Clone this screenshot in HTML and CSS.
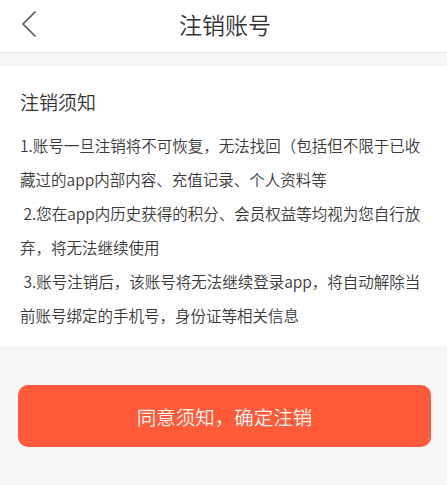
FILE: index.html
```html
<!DOCTYPE html>
<html>
  <head>
    <meta charset="utf-8">
    <title>注销账号</title>
    <link rel="stylesheet" href="styles.css">
  </head>
  <body>
    <div class="page">
      <div class="header">
        <button class="back-button" aria-label="返回">
          <svg width="16" height="28" viewBox="0 0 16 28">
            <path d="M14.5 1.5 L2 14 L14.5 26.5" fill="none" stroke="#555" stroke-width="1.6"/>
          </svg>
        </button>
        <span class="header-title">注销账号</span>
      </div>

      <div class="notice">
        <div class="notice-title">注销须知</div>
        <div class="notice-list">
          <p class="notice-item">1.账号一旦注销将不可恢复，无法找回（包括但不限于已收藏过的app内部内容、充值记录、个人资料等</p>
          <p class="notice-item"> 2.您在app内历史获得的积分、会员权益等均视为您自行放弃，将无法继续使用</p>
          <p class="notice-item"> 3.账号注销后，该账号将无法继续登录app，将自动解除当前账号绑定的手机号，身份证等相关信息</p>
        </div>
      </div>

      <div class="actions">
        <button class="confirm-button">同意须知，确定注销</button>
      </div>
    </div>
  </body>
</html>
```

FILE: styles.css
```css
:root {
  --primary: #ff5a3a;
  --background: #f5f6f8;
  --surface: #ffffff;
  --text: #333333;
  --text-body: #3a3a3a;
  --border: #e6e6e8;
}

body {
  margin: 0;
  font-family: "Noto Sans CJK SC", "Noto Sans", sans-serif;
  font-weight: 350;
  background: var(--background);
  color: var(--text);
}

.page {
  display: flex;
  flex-direction: column;
  min-height: 485px;
}

.header {
  position: relative;
  display: flex;
  align-items: center;
  justify-content: center;
  height: 52px;
  background: var(--surface);
  border-bottom: 1px solid var(--border);
}

.back-button {
  position: absolute;
  left: 21px;
  top: 10px;
  padding: 0;
  border: none;
  background: transparent;
  display: flex;
}

.header-title {
  font-size: 23px;
  line-height: 30px;
  padding: 0 0 4px 3px;
  color: var(--text);
}

.notice {
  margin-top: 13px;
  padding: 23px 20px 15px;
  background: var(--surface);
}

.notice-title {
  font-size: 19px;
  line-height: 26px;
  color: var(--text);
}

.notice-list {
  margin-top: 13px;
}

.notice-item {
  margin: 0;
  font-size: 15.5px;
  line-height: 34px;
  color: var(--text-body);
  white-space: pre-wrap;
}

.actions {
  padding: 38px 16px 0 18px;
}

.confirm-button {
  width: 100%;
  height: 62px;
  border: none;
  border-radius: 10px;
  background: var(--primary);
  color: #fff4f0;
  font-family: inherit;
  font-weight: 350;
  font-size: 19.5px;
  cursor: pointer;
}
```
